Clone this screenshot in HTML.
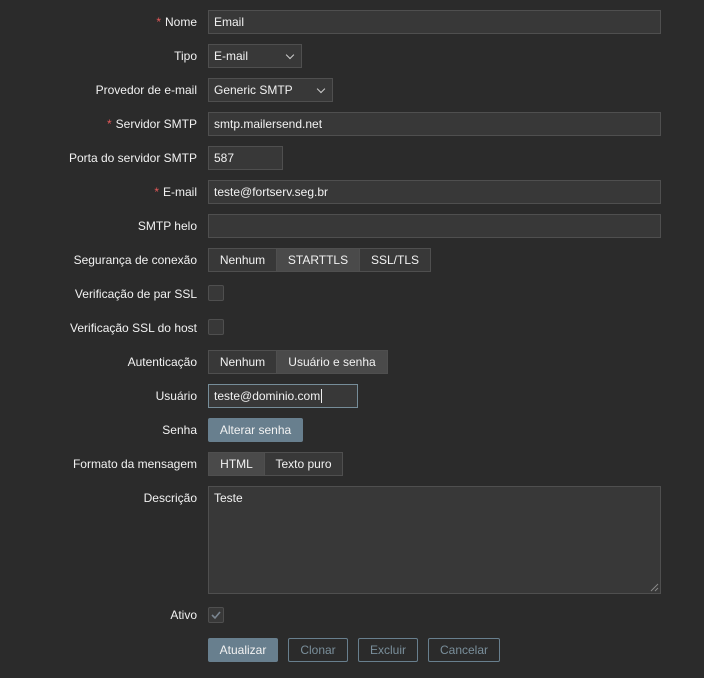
<!DOCTYPE html>
<html><head><meta charset="utf-8"><style>
*{box-sizing:border-box;margin:0;padding:0}
body{width:704px;height:678px;background:#2b2b2b;font-family:"Liberation Sans",Arial,sans-serif;font-size:12px;color:#f2f2f2;position:relative;overflow:hidden}
.l{position:absolute;right:507px;text-align:right;white-space:nowrap;line-height:24px}
.l b{color:#e45959;font-weight:normal;margin-right:4px}
.i{position:absolute;left:208px;height:24px;background:#383838;border:1px solid #4f4f4f;line-height:22px;padding-left:5px;white-space:nowrap}
.sel:after{content:"";position:absolute;right:8px;top:7px;width:5px;height:5px;border-right:1px solid #ccc;border-bottom:1px solid #ccc;transform:rotate(45deg)}
.seg{position:absolute;left:208px;height:24px;display:flex;border:1px solid #4f4f4f;background:#383838}
.seg span{line-height:22px;text-align:center;border-right:1px solid #4f4f4f}
.seg span:last-child{border-right:none}
.seg .on{background:#4a4a4a}
.cb{position:absolute;left:208px;width:16px;height:16px;background:#383838;border:1px solid #4f4f4f;border-radius:2px}
.btn{position:absolute;top:638px;height:24px;line-height:22px;text-align:center;border:1px solid #687f8e;color:#7a8f9b;border-radius:2px}
.pri{background:#687f8e;color:#f2f2f2}
</style></head><body>
<div class="l" style="top:10px"><b>*</b>Nome</div><div class="i" style="top:10px;width:453px">Email</div>
<div class="l" style="top:44px">Tipo</div><div class="i sel" style="top:44px;width:94px">E-mail</div>
<div class="l" style="top:78px">Provedor de e-mail</div><div class="i sel" style="top:78px;width:125px">Generic SMTP</div>
<div class="l" style="top:112px"><b>*</b>Servidor SMTP</div><div class="i" style="top:112px;width:453px">smtp.mailersend.net</div>
<div class="l" style="top:146px">Porta do servidor SMTP</div><div class="i" style="top:146px;width:75px">587</div>
<div class="l" style="top:180px"><b>*</b>E-mail</div><div class="i" style="top:180px;width:453px">teste@fortserv.seg.br</div>
<div class="l" style="top:214px">SMTP helo</div><div class="i" style="top:214px;width:453px"></div>
<div class="l" style="top:248px">Segurança de conexão</div>
<div class="seg" style="top:248px"><span style="width:68px">Nenhum</span><span class="on" style="width:83px">STARTTLS</span><span style="width:70px">SSL/TLS</span></div>
<div class="l" style="top:282px">Verificação de par SSL</div><div class="cb" style="top:285px"></div>
<div class="l" style="top:316px">Verificação SSL do host</div><div class="cb" style="top:319px"></div>
<div class="l" style="top:350px">Autenticação</div>
<div class="seg" style="top:350px"><span style="width:68px">Nenhum</span><span class="on" style="width:110px">Usuário e senha</span></div>
<div class="l" style="top:384px">Usuário</div><div class="i" style="top:384px;width:150px;border-color:#768d99">teste@dominio.com<span style="border-left:1px solid #eee;margin-left:1px"></span></div>
<div class="l" style="top:418px">Senha</div><div class="btn pri" style="left:208px;top:418px;width:95px">Alterar senha</div>
<div class="l" style="top:452px">Formato da mensagem</div>
<div class="seg" style="top:452px"><span class="on" style="width:56px">HTML</span><span style="width:77px">Texto puro</span></div>
<div class="l" style="top:486px">Descrição</div><div class="i" style="top:486px;width:453px;height:108px;line-height:22px">Teste<svg width="10" height="10" viewBox="0 0 10 10" style="position:absolute;right:1px;bottom:1px"><path d="M9 2L2 9M9 6L6 9" stroke="#888" stroke-width="1"/></svg></div>
<div class="l" style="top:603px">Ativo</div>
<div class="cb" style="top:607px"><svg width="14" height="14" viewBox="0 0 14 14" style="position:absolute;left:0;top:0"><path d="M3 7l3 3 5-6" stroke="#7a8590" stroke-width="1.6" fill="none"/></svg></div>
<div class="btn pri" style="left:208px;width:70px">Atualizar</div>
<div class="btn" style="left:288px;width:60px">Clonar</div>
<div class="btn" style="left:358px;width:60px">Excluir</div>
<div class="btn" style="left:428px;width:72px">Cancelar</div>
</body></html>
